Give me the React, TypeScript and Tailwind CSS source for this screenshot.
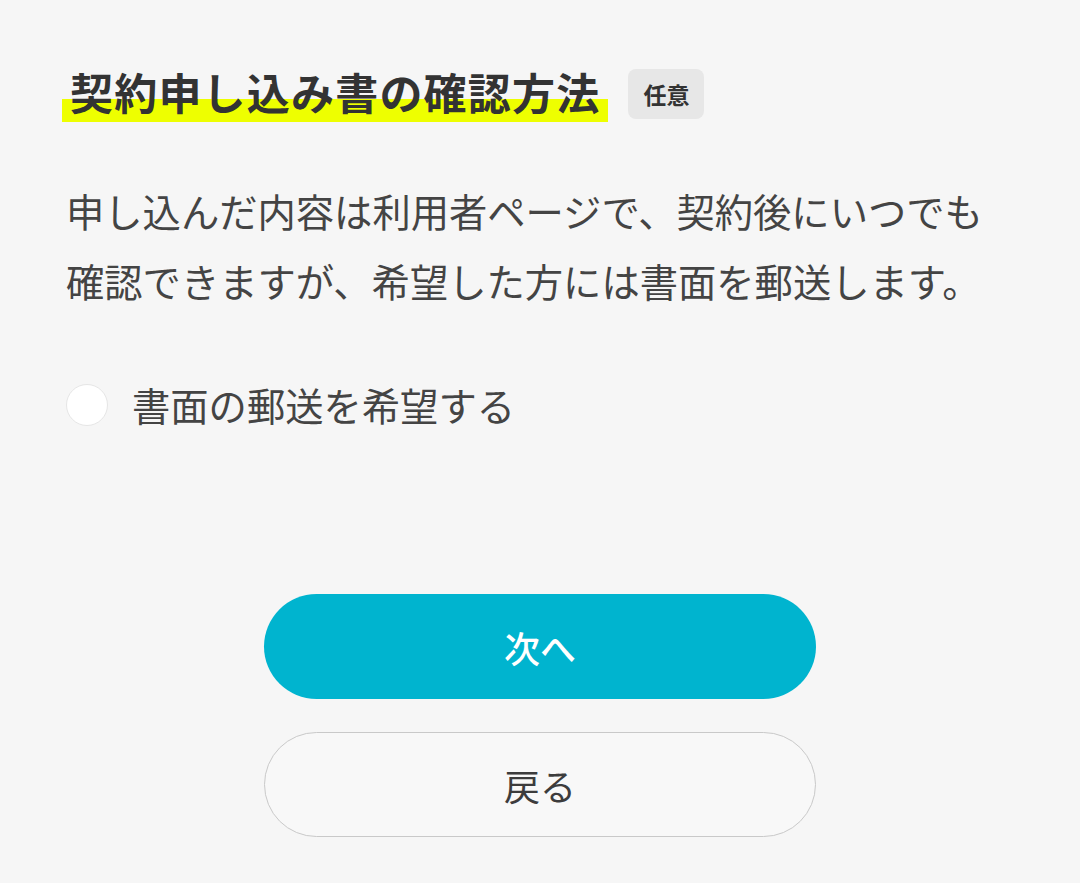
export default function App() {
  return (
    <div
      className="min-h-[883px] w-full bg-[#f6f6f6] text-[#3c3c3c]"
      style={{ fontFamily: '"Noto Sans CJK JP", "Noto Sans", sans-serif' }}
    >
      <div className="px-[66px] pt-[66px]">
        {/* heading */}
        <div className="flex items-center gap-[24px]">
          <h1 className="relative px-[4px] pb-[6px] text-[43px] font-bold leading-[50px] tracking-[1.2px] text-[#333]">
            <span className="absolute bottom-0 left-[-4px] right-[-4px] h-[23px] bg-[#eeff00]" />
            <span className="relative">契約申し込み書の確認方法</span>
          </h1>
          <span className="rounded-[8px] bg-[#e7e7e7] px-[15px] py-[8px] text-[23px] font-bold leading-[34px] text-[#333]">
            任意
          </span>
        </div>

        <p className="mt-[54px] text-[38.3px] leading-[70px] text-[#444]">
          申し込んだ内容は利用者ページで、契約後にいつでも
          <br />
          確認できますが、希望した方には書面を郵送します。
        </p>

        <label className="mt-[64px] flex items-center gap-[24px]">
          <span className="h-[42px] w-[42px] rounded-full border border-[#e6e6e6] bg-white" />
          <span className="text-[38.3px] leading-[50px] text-[#444]">書面の郵送を希望する</span>
        </label>
      </div>

      <div className="mt-[164px] flex flex-col items-center gap-[33px]">
        <button className="h-[105px] w-[552px] rounded-full bg-[#00b4cf] text-[36px] font-medium text-white">
          次へ
        </button>
        <button className="h-[105px] w-[552px] rounded-full border border-[#c9c9c9] bg-[#f8f8f8] text-[36px] text-[#3c3c3c]">
          戻る
        </button>
      </div>
    </div>
  )
}
